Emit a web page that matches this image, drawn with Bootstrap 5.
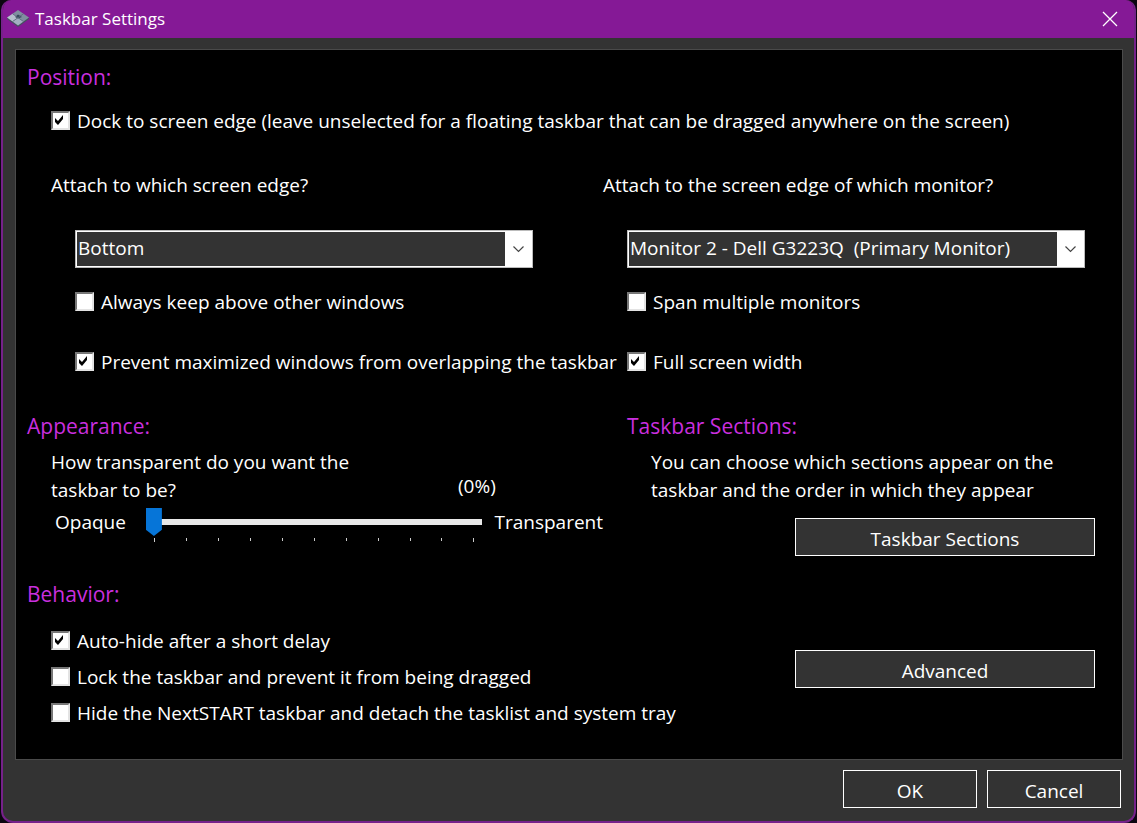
<!DOCTYPE html>
<html lang="en" data-bs-theme="dark">
<head>
<meta charset="utf-8">
<meta name="viewport" content="width=device-width, initial-scale=1">
<title>Taskbar Settings</title>
<link href="https://cdn.jsdelivr.net/npm/bootstrap@5.3.0/dist/css/bootstrap.min.css" rel="stylesheet">
<style>
  body { background: #0b0610; color: #fff; font: 19px/28px "Open Sans", "Noto Sans", sans-serif; }
  .window { background: #333; border: 2px solid #76218a; border-top: 0; border-radius: 10px 10px 12px 12px; margin: 0 1px; min-height: 100vh; overflow: hidden; }
  .titlebar { background: #851996; height: 38px; margin: 0 -2px; padding: 0 18px 0 6px; font-size: 17px; }
  .brand { gap: 6px; }
  .btn-x { background: none; border: 0; padding: 0; color: #fff; line-height: 0; }
  .panel { background: #000; border: 1px solid #4a4a4a; margin: 11px 11px 10px 12px; padding: 13px 11px 32px; }
  h2 { color: #c92fdf; font-size: 21px; line-height: 28px; font-weight: 400; margin: 0; }
  .left-col { flex: 0 0 auto; width: 53.14%; padding-left: 24px; }
  .right-col { flex: 1 1 0; min-width: 0; }
  .indent { padding-left: 24px; }
  .check { display: flex; align-items: center; gap: 7px; white-space: nowrap; }
  .check + .check { margin-top: 8px; }
  .edge-options { margin-top: 31px; }
  .edge-options .check { margin-top: 20px; }
  .edge-options .check + .check { margin-top: 32px; }
  .check input { appearance: none; flex: none; width: 19px; height: 19px; margin: 0 0 1px; background: #fff center/15px 15px no-repeat; border: 2px solid; border-color: #777 #e3e3e3 #e3e3e3 #777; }
  .check input:checked { background-image: url("data:image/svg+xml,%3Csvg xmlns='http://www.w3.org/2000/svg' viewBox='0 0 15 15'%3E%3Cpath d='M2 5l3 3 5-6v4l-5 6-3-3z'/%3E%3C/svg%3E"); }
  .drop { appearance: none; display: block; width: 458px; height: 38px; border: 1px solid #bbb; border-radius: 0; color: #fff; padding: 0 30px 2px 2px; box-shadow: inset 0 0 0 1px #fff;
    background: url("data:image/svg+xml,%3Csvg xmlns='http://www.w3.org/2000/svg' viewBox='0 0 27 36'%3E%3Cpath fill='%23fff' d='M0 0h27v36H0z'/%3E%3Cpath fill='none' stroke='%23444' stroke-width='1.200' d='M8.500 15.500l5 5 5-5'/%3E%3C/svg%3E") right center/27px 36px no-repeat #333; }
  .act { background: #333; color: #fff; border: 1px solid #fff; border-radius: 0; height: 38px; padding: 4px 0 0; font-size: 19px; line-height: 28px; }
  .act.wide { width: 300px; }
  .act.std { width: 134px; }
  .ask { width: 407px; }
  .opaque { width: 91px; }
  .slider { width: 337px; }
  .slider input { appearance: none; display: block; width: 100%; height: 28px; margin: 0; background: none; }
  .slider input::-webkit-slider-runnable-track { height: 6px; background: #e8e8e8; }
  .slider input::-webkit-slider-thumb { appearance: none; width: 16px; height: 28px; margin-top: -11px; background: #0675d8; clip-path: polygon(0 0, 100% 0, 100% 78%, 50% 100%, 0 78%); }
  .ticks { margin: 2px 8px 0; height: 4px; }
  .ticks i { width: 1px; height: 3px; background: #ccc; }
  .ticks i:first-child, .ticks i:last-child { height: 4px; }
  .mt-row { margin-top: 8px; }
  .mt-block { margin-top: 36px; }
  .sections-btn { margin-top: 14px; }
  .behavior { margin-top: 24px; }
  .behavior .indent { margin-top: 19px; }
  .advanced { padding-top: 70px; }
  .dialog-actions { gap: 10px; padding-right: 13px; }
</style>
</head>
<body>
<main class="window">
  <header class="titlebar d-flex align-items-center justify-content-between">
    <div class="brand d-flex align-items-center">
      <svg width="22" height="18" viewBox="0 0 22 18" aria-hidden="true">
        <path fill="#46505f" d="M0 7.500v1.500L11 17l11-8V7.500z"/>
        <path fill="#7f8fa0" d="M11 0l5.500 3.800L11 7.600 5.500 3.800z"/>
        <path fill="#b5bfce" d="M5.500 3.800L11 7.600l-5.500 4L0 7.600z"/>
        <path fill="#7f8f9f" d="M16.500 3.800L22 7.600l-5.500 4L11 7.600z"/>
        <path fill="#a3aec2" d="M11 7.600l5.500 4L11 15.500l-5.500-3.900z"/>
        <path fill="#33485a" d="M11 4.500l4 2.500-4 1.500L8 7z"/>
        <path fill="none" stroke="#5b6b7c" stroke-width=".8" d="M5.500 11.600l11-7.800M5.500 3.800l11 7.800"/>
      </svg>
      <span>Taskbar Settings</span>
    </div>
    <button type="button" class="btn-x" aria-label="Close">
      <svg width="16" height="16" viewBox="0 0 16 16"><path fill="none" stroke="#fff" stroke-width="1.300" d="M1 1l14 14M15 1L1 15"/></svg>
    </button>
  </header>

  <form>
    <section class="panel">
      <h2>Position:</h2>
      <div class="indent mt-3">
        <label class="check"><input type="checkbox" checked>Dock to screen edge (leave unselected for a floating taskbar that can be dragged anywhere on the screen)</label>
      </div>
      <div class="d-flex mt-block">
        <div class="left-col">
          <label for="edge">Attach to which screen edge?</label>
          <div class="indent edge-options">
            <select id="edge" class="drop"><option>Bottom</option><option>Top</option></select>
            <label class="check"><input type="checkbox">Always keep above other windows</label>
            <label class="check"><input type="checkbox" checked>Prevent maximized windows from overlapping the taskbar</label>
          </div>
        </div>
        <div class="right-col">
          <label for="monitor">Attach to the screen edge of which monitor?</label>
          <div class="indent edge-options">
            <select id="monitor" class="drop"><option>Monitor 2 - Dell G3223Q&nbsp; (Primary Monitor)</option></select>
            <label class="check"><input type="checkbox">Span multiple monitors</label>
            <label class="check"><input type="checkbox" checked>Full screen width</label>
          </div>
        </div>
      </div>

      <div class="d-flex mt-block">
        <div class="left-col ps-0">
          <h2>Appearance:</h2>
          <div class="indent mt-row">
            <div class="d-flex align-items-end">
              <label for="alpha" class="ask">How transparent do you want the<br>taskbar to be?</label>
              <output for="alpha" class="pb-1">(0%)</output>
            </div>
            <div class="d-flex mt-1 ps-1">
              <span class="opaque">Opaque</span>
              <div class="slider">
                <input id="alpha" type="range" min="0" max="100" value="0">
                <div class="ticks d-flex justify-content-between" aria-hidden="true"><i></i><i></i><i></i><i></i><i></i><i></i><i></i><i></i><i></i><i></i><i></i></div>
              </div>
              <span class="ms-2 ps-1">Transparent</span>
            </div>
          </div>
        </div>
        <div class="right-col indent">
          <h2>Taskbar Sections:</h2>
          <p class="indent mt-row mb-0">You can choose which sections appear on the<br>taskbar and the order in which they appear</p>
          <div class="sections-btn d-flex justify-content-end pe-3"><button type="button" class="btn act wide">Taskbar Sections</button></div>
        </div>
      </div>

      <div class="behavior d-flex">
        <div class="left-col ps-0">
          <h2>Behavior:</h2>
          <div class="indent">
            <label class="check"><input type="checkbox" checked>Auto-hide after a short delay</label>
            <label class="check"><input type="checkbox">Lock the taskbar and prevent it from being dragged</label>
            <label class="check"><input type="checkbox">Hide the NextSTART taskbar and detach the tasklist and system tray</label>
          </div>
        </div>
        <div class="advanced right-col d-flex justify-content-end align-items-start pe-3"><button type="button" class="btn act wide">Advanced</button></div>
      </div>
    </section>
    <footer class="dialog-actions d-flex justify-content-end">
      <button type="submit" class="btn act std">OK</button>
      <button type="button" class="btn act std">Cancel</button>
    </footer>
  </form>
</main>
<script src="https://cdn.jsdelivr.net/npm/bootstrap@5.3.0/dist/js/bootstrap.bundle.min.js"></script>
</body>
</html>
